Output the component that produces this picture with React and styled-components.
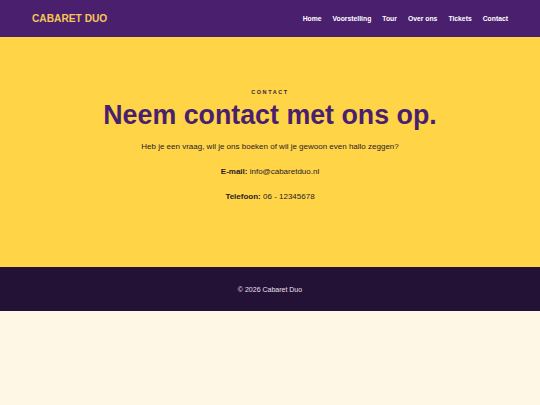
import React from 'react'
import styled, { createGlobalStyle } from "styled-components";

const Global = createGlobalStyle`
body {
  margin: 0;
  background: #fff7e6;
  font-family: "Liberation Sans", Arial, sans-serif;
}
`;

const Header = styled.header`
background-color: #4a1f6e;
height: 37px;
padding: 0px 32px;
display: flex;
align-items: center;
justify-content: space-between;
`;

const Logo = styled.div`
color: #f7c657;
font-size: 10.2px;
font-weight: bold;
`;

const Nav = styled.nav`
display: flex;
gap: 11px;
`;

const NavLink = styled.a`
color: #ffffff;
font-size: 6.8px;
font-weight: bold;
text-decoration: none;
`;

const Section = styled.section`
background-color: #ffd447;
height: 230px;
display: flex;
flex-direction: column;
align-items: center;
padding-top: 52px;
box-sizing: border-box;
`;

const Label = styled.div`
font-size: 5.5px;
font-weight: bold;
letter-spacing: 1.6px;
color: #3a2240;
margin-bottom: 5px;
`;

const Title = styled.h1`
font-size: 26.8px;
font-weight: bold;
color: #4a1f6e;
margin: 0px 0px 11px;
`;

const Para = styled.p`
font-size: 8px;
color: #2a1a2a;
margin: 0px 0px 16px;
`;

const Footer = styled.footer`
background-color: #231136;
height: 44px;
display: flex;
align-items: center;
justify-content: center;
color: #e8e0ee;
font-size: 7px;
`;

export default function App() {
    return (<>
        <Global />
        <Header>
            <Logo>CABARET DUO</Logo>
            <Nav>
                <NavLink>Home</NavLink>
                <NavLink>Voorstelling</NavLink>
                <NavLink>Tour</NavLink>
                <NavLink>Over ons</NavLink>
                <NavLink>Tickets</NavLink>
                <NavLink>Contact</NavLink>
            </Nav>
        </Header>
        <Section>
            <Label>CONTACT</Label>
            <Title>Neem contact met ons op.</Title>
            <Para>Heb je een vraag, wil je ons boeken of wil je gewoon even hallo zeggen?</Para>
            <Para><b>E-mail:</b> info@cabaretduo.nl</Para>
            <Para><b>Telefoon:</b> 06 - 12345678</Para>
        </Section>
        <Footer>© 2026 Cabaret Duo</Footer>
    </>);
}
